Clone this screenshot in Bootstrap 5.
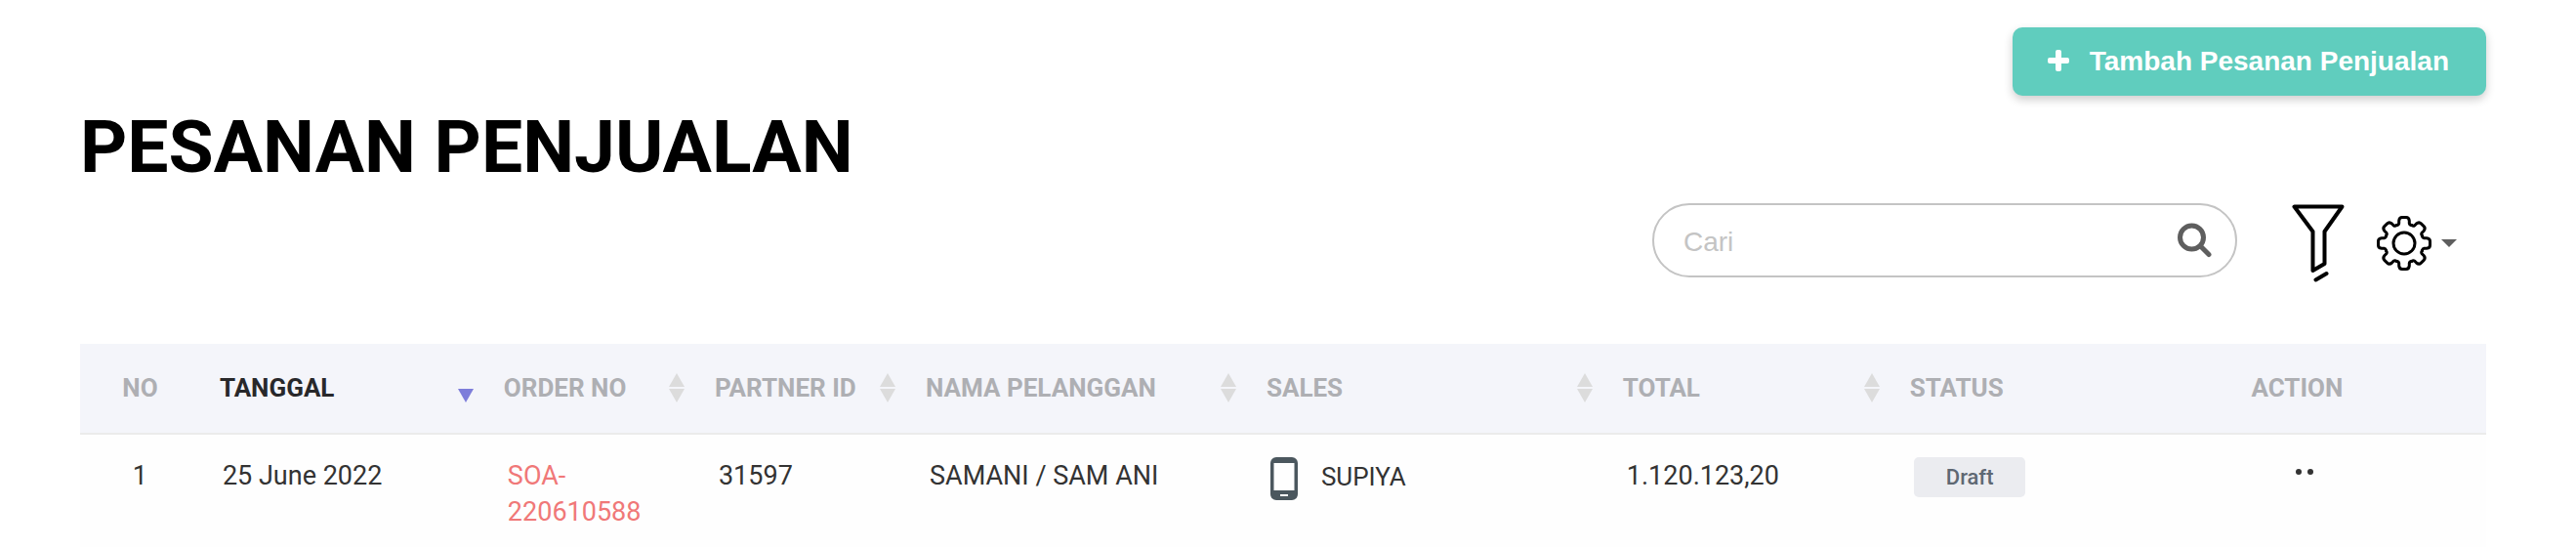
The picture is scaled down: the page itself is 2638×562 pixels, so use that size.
<!DOCTYPE html>
<html lang="id">
<head>
<meta charset="utf-8">
<meta name="viewport" content="width=device-width, initial-scale=1">
<title>Pesanan Penjualan</title>
<link href="https://cdn.jsdelivr.net/npm/bootstrap@5.3.0/dist/css/bootstrap.min.css" rel="stylesheet">
<style>
  body { font-family: Roboto, "Liberation Sans", sans-serif; font-size: 26px; line-height: 37px; color: #333; background: #fff; }
  .page { padding: 28px 92px 0 82px; }
  .btn-add { font: 700 28px/36px "Liberation Sans", Arial, sans-serif; color: #fff; background: #60cdbe; border: 0; border-radius: 10px; height: 70px; padding: 0 38px 0 35px; gap: 20px; box-shadow: 0 4px 10px rgba(0,0,0,.2); }
  .btn-add:hover { color: #fff; background: #4fbcad; }
  .page-title { font-size: 75px; line-height: 94px; font-weight: 700; color: #000; margin: 5px 0 11px; }
  .tools { height: 76px; margin-bottom: 68px; padding-right: 30px; }
  .search-box { width: 599px; border: 2px solid #c4c4c4; border-radius: 38px; padding: 0 24px 0 30px; margin-right: 56px; }
  .search-box input { font: 28px/36px "Liberation Sans", Arial, sans-serif; padding: 4px 0 0; }
  .search-box input::placeholder { color: #c4c4c4; opacity: 1; }
  .tool-icons { gap: 33px; padding-top: 5px; }
  .settings { gap: 10px; }
  .plain-btn { border: 0; background: none; padding: 0; line-height: 0; color: inherit; }
  .orders { table-layout: fixed; margin: 0; color: #333; font-size: 27px; }
  .orders > thead th { background: #f4f5fa; border-bottom: 2px solid #ebebeb; color: #aeafb3; padding: 0 16px 2px 15px; height: 92px; font-size: 26px; font-weight: 700; line-height: 36px; }
  .orders > thead th.sorted { color: #28282a; padding-left: 16px; }
  .orders > tbody td { background: #fefefe; border: 0; padding: 24px 19px 17px; }
  .orders > tbody td.with-icon { padding-top: 23px; }
  .orders > thead th:first-child, .orders > tbody td:first-child { padding-left: 16px; padding-right: 20px; }
  .orders a { color: #f07878; text-decoration: none; }
  .sorter { fill: #dcdcdc; }
  .sorted .sorter { fill: #7d7dda; }
  .sales-name { font-size: 26px; line-height: 41px; gap: 24px; }
  .status-tag { font-size: 22px; line-height: 25px; font-weight: 500; color: #5e6873; background: #ebecf0; border-radius: 5px; padding: 8px 33px; }
  .orders > tbody td.actions { padding-left: 34px; padding-top: 18px; }
</style>
</head>
<body>
<svg class="d-none" xmlns="http://www.w3.org/2000/svg">
  <symbol id="sort" viewBox="0 0 16 30"><path d="M8 0l8 14H0zM0 16h16L8 30z"/></symbol>
</svg>
<main class="page">
  <div class="d-flex justify-content-end">
    <button type="button" class="btn btn-add d-flex align-items-center">
      <svg width="24" height="24" viewBox="0 0 24 24" aria-hidden="true"><path d="M9 2q0-2 2-2h2q2 0 2 2v6h6q2 0 2 2v2q0 2-2 2h-6v6q0 2-2 2h-2q-2 0-2-2v-6H3q-2 0-2-2v-2q0-2 2-2h6z" fill="#fff"/></svg>
      Tambah Pesanan Penjualan
    </button>
  </div>
  <h1 class="page-title">PESANAN PENJUALAN</h1>
  <div class="tools d-flex justify-content-end align-items-stretch">
    <form class="search-box d-flex align-items-center" role="search">
      <input id="q" type="text" class="form-control border-0 shadow-none bg-transparent" placeholder="Cari" aria-label="Cari">
      <button type="button" class="plain-btn" aria-label="Cari pesanan"><svg width="35" height="36" viewBox="0 0 35 36" fill="none" stroke="#5e5e5e" stroke-linecap="round"><circle cx="14.500" cy="15" r="12" stroke-width="5"/><path d="M24 24.500l8 8" stroke-width="5"/></svg></button>
    </form>
    <div class="tool-icons d-flex align-items-center">
      <button type="button" class="plain-btn" aria-label="Filter"><svg width="54" height="80" viewBox="0 0 54 80" fill="none" stroke="#000" stroke-width="4" stroke-linecap="round" stroke-linejoin="round"><path d="M2.500 2.500h49L33.500 28v33L21.500 68V28zM24.500 77.500l11-6.500"/></svg></button>
      <button type="button" class="settings plain-btn d-flex align-items-center" aria-label="Pengaturan">
        <svg width="56" height="56" viewBox="-28 -28 56 56" fill="none" stroke="#000" stroke-width="3" stroke-linecap="round">
          <circle r="11"/>
          <path id="tooth" d="M-7.650-18.480Q-5.500-18.700-5.300-20.500V-23Q-5-26.500-2-26.500H2Q5-26.500 5.300-23V-20.500Q5.500-18.700 7.650-18.480"/>
          <use href="#tooth" transform="rotate(45)"/><use href="#tooth" transform="rotate(90)"/><use href="#tooth" transform="rotate(135)"/><use href="#tooth" transform="rotate(180)"/><use href="#tooth" transform="rotate(225)"/><use href="#tooth" transform="rotate(270)"/><use href="#tooth" transform="rotate(315)"/>
        </svg>
        <svg width="16" height="8" viewBox="0 0 16 8"><path d="M0 0h16L8 8z" fill="#5e5e5e"/></svg>
      </button>
    </div>
  </div>
  <table class="table orders">
    <colgroup><col style="width:5.15%"><col style="width:11.85%"><col style="width:8.77%"><col style="width:8.77%"><col style="width:14.16%"><col style="width:14.81%"><col style="width:11.93%"><col style="width:8.89%"><col style="width:15.67%"></colgroup>
    <thead>
      <tr class="align-middle text-nowrap">
        <th scope="col" class="text-center">NO</th>
        <th scope="col" class="sorted"><div class="d-flex align-items-center justify-content-between">TANGGAL<svg class="sorter" width="16" height="30" viewBox="0 0 16 30"><path d="M0 16h16L8 30z"/></svg></div></th>
        <th scope="col"><div class="d-flex align-items-center justify-content-between">ORDER NO<svg class="sorter" width="16" height="30"><use href="#sort"/></svg></div></th>
        <th scope="col"><div class="d-flex align-items-center justify-content-between">PARTNER ID<svg class="sorter" width="16" height="30"><use href="#sort"/></svg></div></th>
        <th scope="col"><div class="d-flex align-items-center justify-content-between">NAMA PELANGGAN<svg class="sorter" width="16" height="30"><use href="#sort"/></svg></div></th>
        <th scope="col"><div class="d-flex align-items-center justify-content-between">SALES<svg class="sorter" width="16" height="30"><use href="#sort"/></svg></div></th>
        <th scope="col"><div class="d-flex align-items-center justify-content-between">TOTAL<svg class="sorter" width="16" height="30"><use href="#sort"/></svg></div></th>
        <th scope="col">STATUS</th>
        <th scope="col" class="text-center">ACTION</th>
      </tr>
    </thead>
    <tbody>
      <tr>
        <td class="text-center">1</td>
        <td>25 June 2022</td>
        <td><a href="#order">SOA-<br>220610588</a></td>
        <td>31597</td>
        <td>SAMANI / SAM ANI</td>
        <td class="with-icon"><div class="sales-name d-flex align-items-start"><svg width="28" height="44" viewBox="0 0 28 44" aria-hidden="true"><path fill="#4b575e" fill-rule="evenodd" d="M6 0h16a6 6 0 0 1 6 6v32a6 6 0 0 1-6 6H6a6 6 0 0 1-6-6V6a6 6 0 0 1 6-6zM3.500 6v28h21V6zM10 38v2h8v-2z"/></svg>SUPIYA</div></td>
        <td>1.120.123,20</td>
        <td class="with-icon"><span class="status-tag d-inline-block">Draft</span></td>
        <td class="actions text-center"><button type="button" class="plain-btn" aria-label="Aksi"><svg width="18" height="6" viewBox="0 0 18 6" fill="#333"><circle cx="3" cy="3" r="3"/><circle cx="15" cy="3" r="3"/></svg></button></td>
      </tr>
    </tbody>
  </table>
</main>
<script src="https://cdn.jsdelivr.net/npm/bootstrap@5.3.0/dist/js/bootstrap.bundle.min.js"></script>
</body>
</html>
